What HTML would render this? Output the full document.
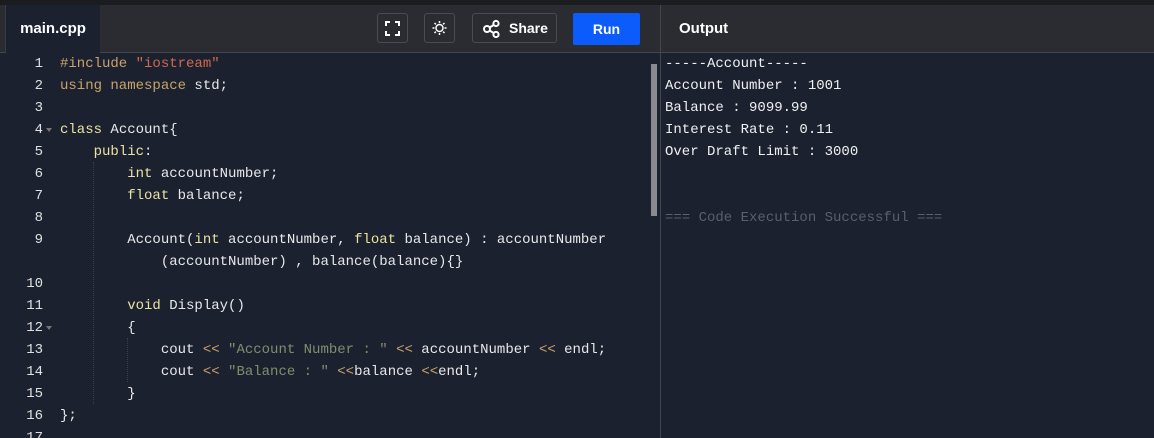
<!DOCTYPE html>
<html><head><style>
html,body{margin:0;width:1154px;height:438px;overflow:hidden}
body{background:#1c2130;position:relative;font-family:"Liberation Sans",sans-serif}
.top{position:absolute;left:0;top:0;width:1154px;height:5px;background:#1b1c1f}
.hdr{position:absolute;left:0;top:5px;width:1154px;height:47px;background:#2b2c31;border-bottom:1px solid #44464d}
.tab{position:absolute;left:5px;top:5px;width:94px;height:48px;background:#1c2130;color:#fff;font-weight:bold;font-size:15px;line-height:48px;text-align:center;border-left:1px solid #3a3c44}
.btn{position:absolute;top:13px;height:30px;border:1px solid #4a4c53;border-radius:3px;box-sizing:border-box}
.run{position:absolute;left:573px;top:13px;width:67px;height:32px;background:#0b5cfa;border-radius:2px;color:#fff;font-weight:bold;font-size:14px;line-height:32px;text-align:center}
.vdiv{position:absolute;left:660px;top:5px;width:1px;height:433px;background:#44464d}
.outl{position:absolute;left:679px;top:5px;line-height:47px;color:#fff;font-weight:bold;font-size:15px}
.code,.out{position:absolute;font-family:"Liberation Mono",monospace;font-size:14px;line-height:22px;white-space:pre;color:#e8e8e8}
.code{left:60px;top:53px}
.ln{position:absolute;left:0;top:53px;width:43px;text-align:right;font-family:"Liberation Mono",monospace;font-size:14px;line-height:22px;color:#e0e0e0;white-space:pre}
.out{left:665px;top:53px;color:#f0f0f0}
.k{color:#c9a46a}.s{color:#d06a4e}.y{color:#ebe3a0}.g{color:#838d6d}.o{color:#c9a46a}
.guide{position:absolute;width:0;border-left:1px dotted #3a3f4d}
.sb{position:absolute;left:651px;top:64px;width:6px;height:152px;background:#8a8b8f}
.tri{position:absolute;left:46px;width:0;height:0;border-left:3px solid transparent;border-right:3px solid transparent;border-top:4px solid #777}
</style></head><body>
<div class="top"></div>
<div class="hdr"></div>
<div class="tab">main.cpp</div>
<div class="btn" style="left:377px;width:31px"><svg width="29" height="28" viewBox="0 0 29 28"><path d="M8 12V8h4M17 8h4v4M21 17v4h-4M12 21H8v-4" stroke="#fff" stroke-width="2" fill="none"/></svg></div>
<div class="btn" style="left:424px;width:31px"><svg width="29" height="28" viewBox="0 0 29 28"><circle cx="14.5" cy="14" r="3.5" stroke="#fff" stroke-width="1.5" fill="none"/><path d="M14.5 7v2M14.5 19v2M7.5 14h2M19.5 14h2M9.5 9l1.4 1.4M18.1 17.6l1.4 1.4M9.5 19l1.4-1.4M18.1 10.4l1.4-1.4" stroke="#fff" stroke-width="1.5"/></svg></div>
<div class="btn" style="left:472px;width:85px;color:#fff;font-weight:bold;font-size:14px"><svg style="position:absolute;left:9px;top:5px" width="20" height="20" viewBox="0 0 20 20"><circle cx="5" cy="10" r="3" stroke="#fff" stroke-width="2" fill="none"/><circle cx="14" cy="4.5" r="2.6" stroke="#fff" stroke-width="2" fill="none"/><circle cx="14" cy="15.5" r="2.6" stroke="#fff" stroke-width="2" fill="none"/><path d="M7.6 8.5l4-2.5M7.6 11.5l4 2.5" stroke="#fff" stroke-width="2"/></svg><span style="position:absolute;left:36px;top:6px">Share</span></div>
<div class="run">Run</div>
<div class="vdiv"></div>
<div class="outl">Output</div>
<div class="guide" style="left:93px;top:162px;height:242px"></div>
<div class="guide" style="left:127px;top:338px;height:44px"></div>
<div class="ln"> 1
 2
 3
 4
 5
 6
 7
 8
 9

10
11
12
13
14
15
16
17</div>
<div class="tri" style="top:128px"></div>
<div class="tri" style="top:326px"></div>
<div class="code"><span class="k">#include</span> <span class="s">"iostream"</span>
<span class="k">using namespace</span> std;

<span class="y">class</span> Account{
    <span class="y">public</span>:
        <span class="y">int</span> accountNumber;
        <span class="y">float</span> balance;

        Account(<span class="y">int</span> accountNumber, <span class="y">float</span> balance) : accountNumber
            (accountNumber) , balance(balance){}

        <span class="y">void</span> Display()
        {
            cout <span class="o">&lt;&lt;</span> <span class="g">"Account Number : "</span> <span class="o">&lt;&lt;</span> accountNumber <span class="o">&lt;&lt;</span> endl;
            cout <span class="o">&lt;&lt;</span> <span class="g">"Balance : "</span> <span class="o">&lt;&lt;</span>balance <span class="o">&lt;&lt;</span>endl;
        }
};</div>
<div class="sb"></div>
<div class="out">-----Account-----
Account Number : 1001
Balance : 9099.99
Interest Rate : 0.11
Over Draft Limit : 3000


<span style="color:#5b5f68">=== Code Execution Successful ===</span></div>
</body></html>
